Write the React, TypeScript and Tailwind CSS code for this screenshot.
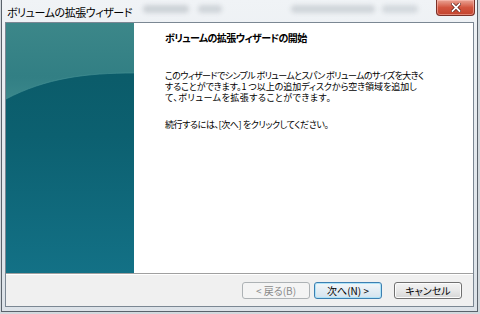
import React from "react";

const jp = "font-['Noto_Sans_CJK_JP','Noto_Sans',sans-serif]";

function Btn({
  children,
  variant = "normal",
  className = "",
}: {
  children: React.ReactNode;
  variant?: "normal" | "disabled" | "default";
  className?: string;
}) {
  const base =
    "w-[68px] h-[17px] rounded-[3px] border flex items-center justify-center text-[10px] leading-none [font-feature-settings:'palt'] " +
    jp;
  const v =
    variant === "disabled"
      ? "border-[#adb2b5] bg-[#f4f4f4] text-[#8a8a8a]"
      : variant === "default"
      ? "border-[#3c7fb1] bg-gradient-to-b from-[#f2f7fa] via-[#e3edf4] to-[#d4e3ee] text-black shadow-[inset_0_0_0_1px_#aee3f8]"
      : "border-[#707070] bg-gradient-to-b from-[#f3f3f3] via-[#e8e8e8] to-[#d6d6d6] text-black shadow-[inset_0_0_0_1px_#fcfcfc]";
  return <div className={`${base} ${v} ${className}`}>{children}</div>;
}

function TealPanel() {
  return (
    <svg width="128" height="250" viewBox="0 0 128 250" className="block shrink-0">
      <defs>
        <linearGradient id="main" x1="0" y1="0" x2="0" y2="1">
          <stop offset="0" stopColor="#0a5864" />
          <stop offset="0.45" stopColor="#0c6070" />
          <stop offset="1" stopColor="#137186" />
        </linearGradient>
        <linearGradient id="top" x1="0" y1="0" x2="0" y2="1">
          <stop offset="0" stopColor="#3c8789" />
          <stop offset="0.7" stopColor="#327f84" />
          <stop offset="1" stopColor="#3a878b" />
        </linearGradient>
      </defs>
      <rect x="0" y="0" width="128" height="250" fill="url(#main)" />
      <path d="M0 0 H128 V50 C80 50 40 55 0 76 Z" fill="url(#top)" />
      <path d="M0 76 C40 55 80 50 128 50" stroke="#4a9598" strokeWidth="1" fill="none" opacity="0.6" />
    </svg>
  );
}

export default function App() {
  return (
    <div className="w-[480px] h-[314px] bg-[#d3d9de] overflow-hidden">
      <div className="ml-[1px] w-[477px] h-[312px] border-x border-b border-[#5a626b] bg-gradient-to-b from-[#f0f3f6] via-[#e3e8ed] to-[#dce2e8] flex flex-col">
        {/* title bar */}
        <div className="relative h-[22px] shrink-0 flex items-center">
          <div className="absolute left-[141px] top-[5px] w-[46px] h-[8px] rounded-sm bg-[#cdd2d7] blur-[2px]" />
          <div className="absolute left-[196px] top-[5px] w-[24px] h-[8px] rounded-sm bg-[#d0d5da] blur-[2px]" />
          <div className="absolute left-[289px] top-[5px] w-[84px] h-[8px] rounded-sm bg-[#d0d5da] blur-[2px]" />
          <div className="absolute left-[380px] top-[5px] w-[36px] h-[8px] rounded-sm bg-[#d4d9de] blur-[2px]" />
          <span className={`relative ml-[5px] mt-[2px] text-[11px] leading-none tracking-[-0.45px] text-black [font-feature-settings:'palt'] ${jp}`}>
            ボリュームの拡張ウィザード
          </span>
          <div className="absolute right-[2px] top-0 w-[39px] h-[16px] rounded-b-[4px] border border-t-0 border-[#7a3027] bg-gradient-to-b from-[#e9a395] via-[#d2553f] to-[#c2432e] flex items-center justify-center shadow-[inset_0_0_0_1px_rgba(255,200,190,0.5)]">
            <svg width="10" height="9" viewBox="0 0 10 9">
              <path d="M1.5 1 L8.5 8 M8.5 1 L1.5 8" stroke="#5a1a12" strokeWidth="3.2" strokeLinecap="square" />
              <path d="M1.5 1 L8.5 8 M8.5 1 L1.5 8" stroke="#ffffff" strokeWidth="1.8" strokeLinecap="square" />
            </svg>
          </div>
        </div>
        {/* client area */}
        <div className="mx-[3px] h-[285px] border border-[#7b8793] bg-white flex flex-col">
          <div className="flex h-[250px]">
            <TealPanel />
            <div className={`flex-1 pl-[31px] pt-[9px] text-black ${jp} [font-feature-settings:'palt']`}>
              <div className="text-[10px] leading-[12px] font-bold tracking-[-0.6px]">
                ボリュームの拡張ウィザードの開始
              </div>
              <div className="mt-[26px] text-[9px] leading-[11px]">
                <div className="tracking-[-0.6px] whitespace-nowrap">
                  このウィザードでシンプル ボリュームとスパン ボリュームのサイズを大きく
                </div>
                <div className="tracking-[-0.05px] whitespace-nowrap">
                  することができます。1 つ以上の追加ディスクから空き領域を追加し
                </div>
                <div className="tracking-[0.5px] whitespace-nowrap">
                  て、ボリュームを拡張することができます。
                </div>
              </div>
              <div className="mt-[16px] text-[9px] leading-[11px] tracking-[-0.4px] whitespace-nowrap">
                続行するには、[次へ] をクリックしてください。
              </div>
            </div>
          </div>
          <div className="h-[1px] bg-[#a0a0a0]" />
          <div className="h-[1px] bg-white" />
          <div className="flex-1 bg-[#f0f0f0] flex items-start justify-end pt-[7px] pr-[11px]">
            <Btn variant="disabled">&lt; 戻る(B)</Btn>
            <Btn variant="default" className="ml-[4px]">次へ(N) &gt;</Btn>
            <Btn className="ml-[12px]">キャンセル</Btn>
          </div>
        </div>
      </div>
    </div>
  );
}
